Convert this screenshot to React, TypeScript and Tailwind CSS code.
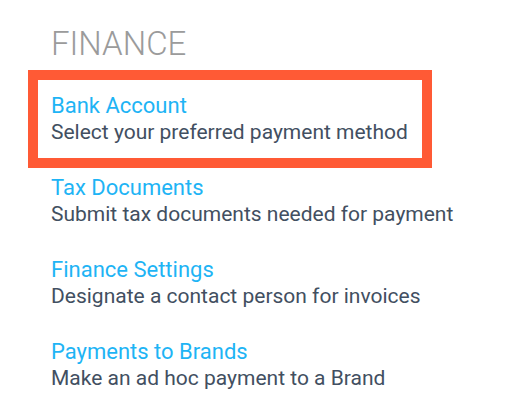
const items = [
  { title: "Bank Account", desc: "Select your preferred payment method", active: true },
  { title: "Tax Documents", desc: "Submit tax documents needed for payment" },
  { title: "Finance Settings", desc: "Designate a contact person for invoices" },
  { title: "Payments to Brands", desc: "Make an ad hoc payment to a Brand" },
];

export default function App() {
  return (
    <div className="w-[507px] h-[419px] bg-white font-['Roboto',sans-serif] pl-[38px] pt-[24px]">
      <h2 className="pl-[13px] text-[33px] leading-[40px] font-light text-[#9b9b9b]">
        FINANCE
      </h2>
      <div className="mt-[16px] flex flex-col gap-[4px]">
        {items.map((it) => (
          <a
            key={it.title}
            href="#"
            className={`block w-[384px] pl-[13px] pt-[13px] pb-[12px] whitespace-nowrap ${
              it.active ? "outline-[10px] outline-solid outline-[#ff5a35]" : ""
            }`}
          >
            <div className="text-[22px] leading-[26px] text-[#1eb4f5]">{it.title}</div>
            <div className="text-[21px] leading-[27px] text-[#424f61]">{it.desc}</div>
          </a>
        ))}
      </div>
    </div>
  );
}
